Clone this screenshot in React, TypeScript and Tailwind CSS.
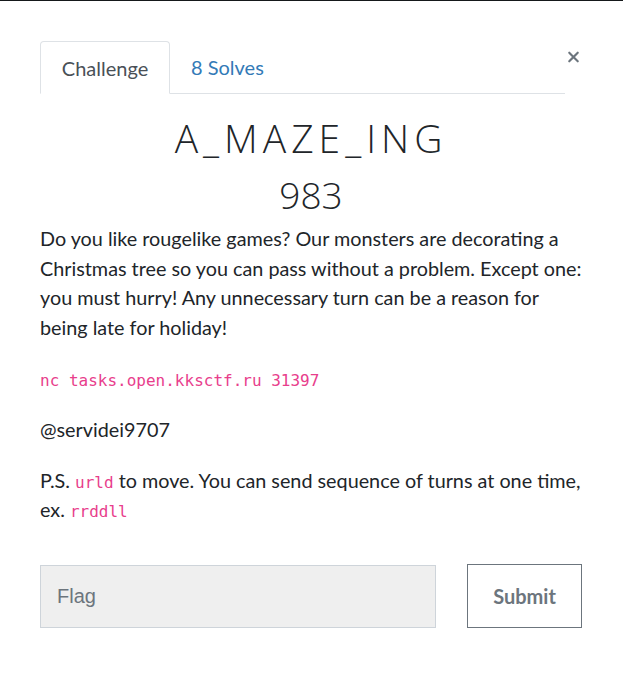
import {X} from "lucide-react"

function App() {
    return (
        <div className="w-[636px] h-[681px] bg-white font-['Lato',sans-serif] text-[#212529]">
            {/* dark strip from the page behind the modal */}
            <div className="h-px w-[623px] bg-[#15181a]" />

            <div className="pl-10 pr-[54px] pt-10">
                {/* Tabs */}
                <div className="flex items-start">
                    <div className="flex flex-1 border-b border-[#dee2e6]">
                        <div className="-mb-px h-[53px] w-[130px] rounded-t border border-b-white border-[#dee2e6] bg-white flex items-center justify-center text-[20px] text-[#495057]">
                            Challenge
                        </div>
                        <div className="h-[52px] px-[21px] flex items-center text-[20px] text-[#337ab7]">
                            8 Solves
                        </div>
                    </div>
                    <button className="w-[17px] mt-[6px] text-[#6c757d] flex justify-end">
                        <X size={20} strokeWidth={3} />
                    </button>
                </div>

                {/* Title and value */}
                <h1 className="mt-[19px] text-center text-[39px] leading-[50px] font-light tracking-[5px] text-[#212529] font-['Open_Sans',sans-serif]">
                    A_MAZE_ING
                </h1>
                <div className="mt-[8px] text-center text-[37px] leading-[48px] font-light font-['Open_Sans',sans-serif]">
                    983
                </div>

                {/* Description */}
                <div className="mt-[5px] text-[19.8px] leading-[29.5px]">
                    <p>
                        Do you like rougelike games? Our monsters are decorating a Christmas tree so you can pass without a problem. Except one: you must hurry! Any unnecessary turn can be a reason for being late for holiday!
                    </p>
                    <p className="mt-[24px] font-['DejaVu_Sans_Mono',monospace] text-[16px] text-[#e83e8c]">
                        nc tasks.open.kksctf.ru 31397
                    </p>
                    <p className="mt-[19px]">@servidei9707</p>
                    <p className="mt-[22px] leading-[29px]">
                        P.S. <code className="font-['DejaVu_Sans_Mono',monospace] text-[16px] leading-none text-[#e83e8c]">urld</code> to move. You can send sequence of turns at one time, ex. <code className="font-['DejaVu_Sans_Mono',monospace] text-[16px] leading-none text-[#e83e8c]">rrddll</code>
                    </p>
                </div>

                {/* Flag form */}
                <div className="mt-[40px] flex items-center gap-[31px]">
                    <input
                        placeholder="Flag"
                        className="h-[63px] w-[396px] border border-[#ced4da] bg-[#efefef] px-4 text-[20px] font-['Liberation_Sans',sans-serif] placeholder:text-[#6c757d] outline-none"
                    />
                    <button className="h-[64px] w-[115px] border border-[#6c757d] text-[20px] font-bold text-[#6c757d]">
                        Submit
                    </button>
                </div>
            </div>
        </div>
    )
}

export default App
